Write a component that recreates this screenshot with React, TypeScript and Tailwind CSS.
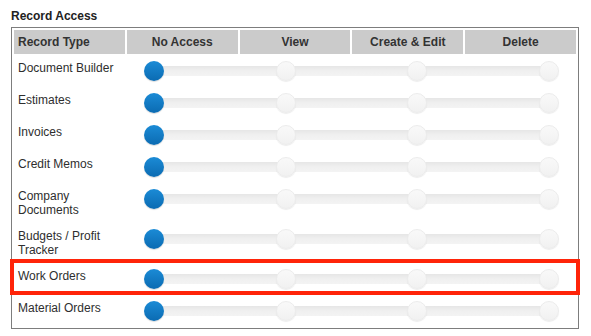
import React from 'react';

const rows = [
  'Document Builder',
  'Estimates',
  'Invoices',
  'Credit Memos',
  'Company Documents',
  'Budgets / Profit Tracker',
  'Work Orders',
  'Material Orders',
];

const columns = ['No Access', 'View', 'Create & Edit', 'Delete'];

const Knob = ({ active }: { active: boolean }) =>
  active ? (
    <span className="relative h-5 w-5 rounded-full bg-gradient-to-b from-[#1b8bd6] to-[#0b6bb2] shadow-[0_1px_1px_rgba(0,0,0,0.15)]" />
  ) : (
    <span className="relative h-5 w-5 rounded-full border border-[#ececec] bg-gradient-to-b from-[#f9f9f9] to-[#f1f1f1] shadow-[0_1px_1px_rgba(0,0,0,0.08)]" />
  );

const AccessSlider = ({ level }: { level: number }) => (
  <div className="relative mx-[17px] flex h-5 items-center justify-between">
    <div className="absolute left-[10px] right-[10px] top-[5px] h-[10px] bg-gradient-to-b from-[#e6e6e6] via-[#f0f0f0] to-[#f3f3f3]" />
    {columns.map((c, i) => (
      <Knob key={c} active={i === level} />
    ))}
  </div>
);

const App = () => {
  return (
    <div className="min-h-screen bg-white pl-[11px] pr-[13px] pt-[9px] font-['Liberation_Sans',Arial,sans-serif] text-[12px] leading-[14px] text-[#2e2e2e]">
      <h2 className="mb-[4px] font-bold text-[#222]">Record Access</h2>
      <div className="w-[568px] border border-[#7d7d7d] p-[2px]">
        <div className="flex flex-col gap-[2px]">
          <div className="grid h-[24px] grid-cols-5 gap-[2px] font-bold text-[#333]">
            <div className="flex items-center bg-[#cbcbcb] pl-[4px]">Record Type</div>
            {columns.map((c) => (
              <div key={c} className="flex items-center justify-center bg-[#cbcbcb]">{c}</div>
            ))}
          </div>
          {rows.map((name) => (
            <div key={name} className="relative grid grid-cols-5 gap-[2px] py-[5px]">
              <div className="pl-[4px] pr-[2px]">{name}</div>
              <div className="col-span-4">
                <AccessSlider level={0} />
              </div>
              {name === 'Work Orders' && (
                <div className="pointer-events-none absolute -bottom-[1px] -left-[4px] -right-[4px] -top-[5px] border-4 border-[#ff2409]" />
              )}
            </div>
          ))}
        </div>
      </div>
    </div>
  );
};

export default App;
